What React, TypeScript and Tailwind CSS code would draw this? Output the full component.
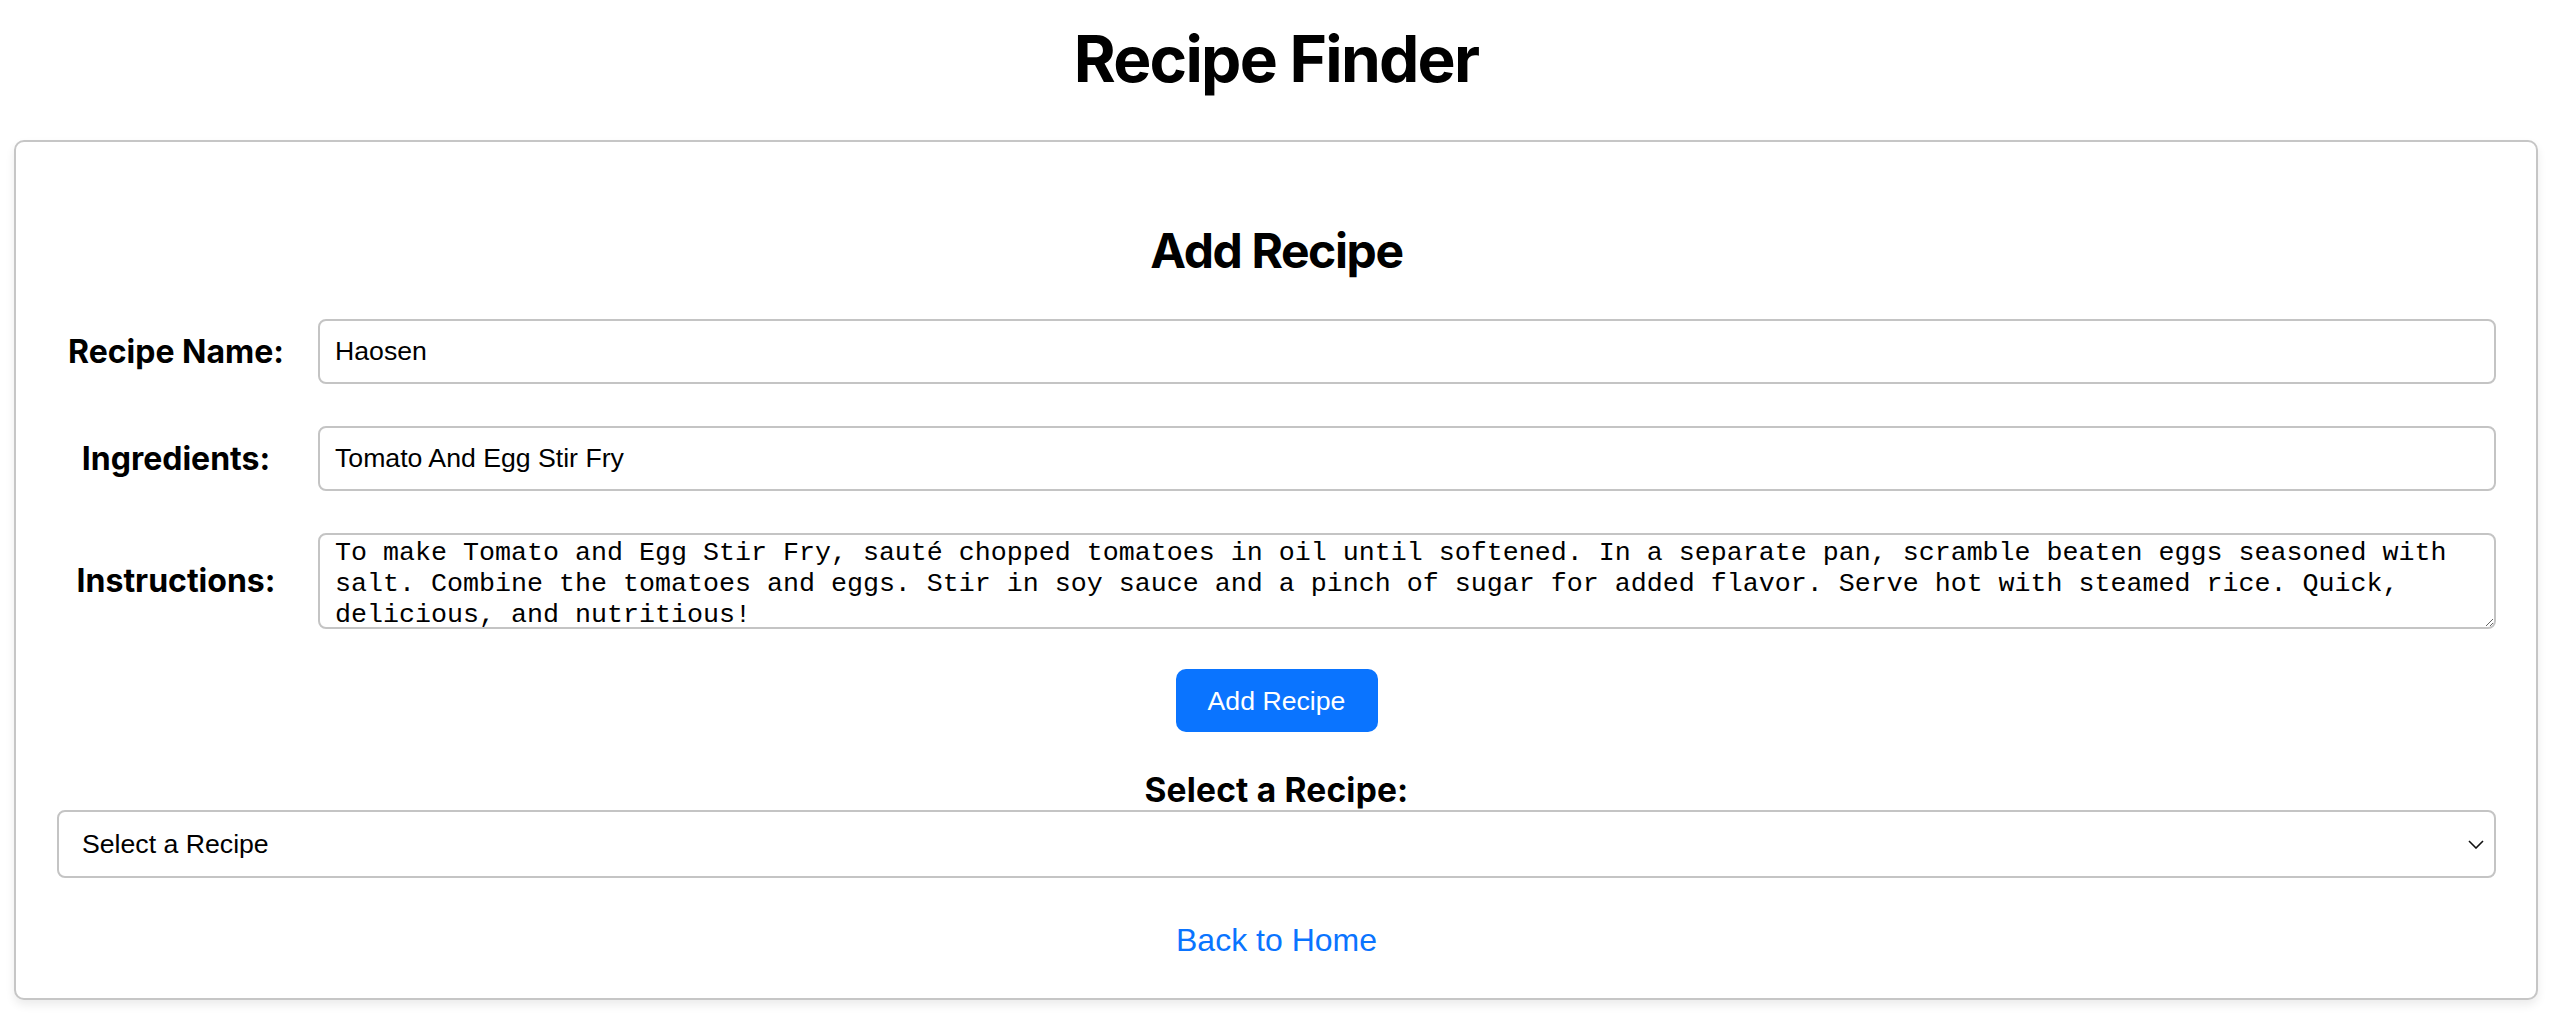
import { useState } from "react";

const instructionsText =
  "To make Tomato and Egg Stir Fry, sauté chopped tomatoes in oil until softened. In a separate pan, scramble beaten eggs seasoned with salt. Combine the tomatoes and eggs. Stir in soy sauce and a pinch of sugar for added flavor. Serve hot with steamed rice. Quick, delicious, and nutritious!";

const FormRow = ({ label, children }: { label: string; children: React.ReactNode }) => (
  <div className="flex items-center gap-[23px]">
    <label className="w-[238px] shrink-0 text-center font-['Inter',sans-serif] text-[32px] font-bold leading-[38px] text-black">
      {label}
    </label>
    <div className="flex-1">{children}</div>
  </div>
);

export default function App() {
  const [name, setName] = useState("Haosen");
  const [ingredients, setIngredients] = useState("Tomato And Egg Stir Fry");
  const [instructions, setInstructions] = useState(instructionsText);
  const [selected, setSelected] = useState("");

  return (
    <div className="min-h-screen bg-white pl-[14px] pr-[22px] text-black">
      <h1 className="pt-[20px] text-center font-['Inter',sans-serif] text-[64px] font-bold leading-[77px] tracking-[-1.75px]">
        Recipe Finder
      </h1>

      {/* Card */}
      <div className="mt-[43px] rounded-[10px] border-2 border-[#c6c6c6] bg-white pb-[39px] pl-[41px] pr-[40px] pt-[40px] shadow-[0_5px_10px_rgba(0,0,0,0.08)]">
        <h2 className="mt-[40px] text-center font-['Inter',sans-serif] text-[48px] font-bold leading-[58px] tracking-[-1.4px]">
          Add Recipe
        </h2>

        <div className="mt-[39px] flex flex-col gap-[42px]">
          <FormRow label="Recipe Name:">
            <input
              value={name}
              onChange={(e) => setName(e.target.value)}
              className="h-[65px] w-full rounded-[8px] border-2 border-[#c4c4c4] px-[15px] font-['Liberation_Sans',Arial,sans-serif] text-[26.67px] text-black outline-none"
            />
          </FormRow>
          <FormRow label="Ingredients:">
            <input
              value={ingredients}
              onChange={(e) => setIngredients(e.target.value)}
              className="h-[65px] w-full rounded-[8px] border-2 border-[#c4c4c4] px-[15px] font-['Liberation_Sans',Arial,sans-serif] text-[26.67px] text-black outline-none"
            />
          </FormRow>
          <FormRow label="Instructions:">
            <textarea
              value={instructions}
              onChange={(e) => setInstructions(e.target.value)}
              className="block h-[96px] w-full overflow-hidden rounded-[8px] border-2 border-[#c4c4c4] px-[15px] pt-[3px] font-['Liberation_Mono','Courier_New',monospace] text-[26.67px] leading-[31px] text-black outline-none"
            />
          </FormRow>
        </div>

        <div className="mt-[40px] flex justify-center">
          <button className="h-[63px] w-[202px] rounded-[10px] bg-[#0a74ff] font-['Liberation_Sans',Arial,sans-serif] text-[26.67px] text-white">
            Add Recipe
          </button>
        </div>

        <div className="mt-[39px] text-center font-['Inter',sans-serif] text-[33.5px] font-bold leading-[38px] tracking-[0.2px]">
          Select a Recipe:
        </div>
        <div className="relative mt-[1px]">
          <select
            value={selected}
            onChange={(e) => setSelected(e.target.value)}
            className="h-[68px] w-full appearance-none rounded-[8px] border-2 border-[#c4c4c4] bg-white pl-[23px] font-['Liberation_Sans',Arial,sans-serif] text-[26.67px] text-black outline-none"
          >
            <option value="">Select a Recipe</option>
            <option value="haosen">Haosen</option>
          </select>
          <svg
            className="pointer-events-none absolute right-[12px] top-[30px]"
            width="16"
            height="9"
            viewBox="0 0 16 9"
            fill="none"
          >
            <path d="M1 1l7 7 7-7" stroke="#111" strokeWidth="1.6" />
          </svg>
        </div>

        <div className="mt-[44px] text-center">
          <a
            href="#"
            className="font-['Liberation_Sans',Arial,sans-serif] text-[32px] leading-[37px] text-[#0a74ff]"
          >
            Back to Home
          </a>
        </div>
      </div>
    </div>
  );
}
